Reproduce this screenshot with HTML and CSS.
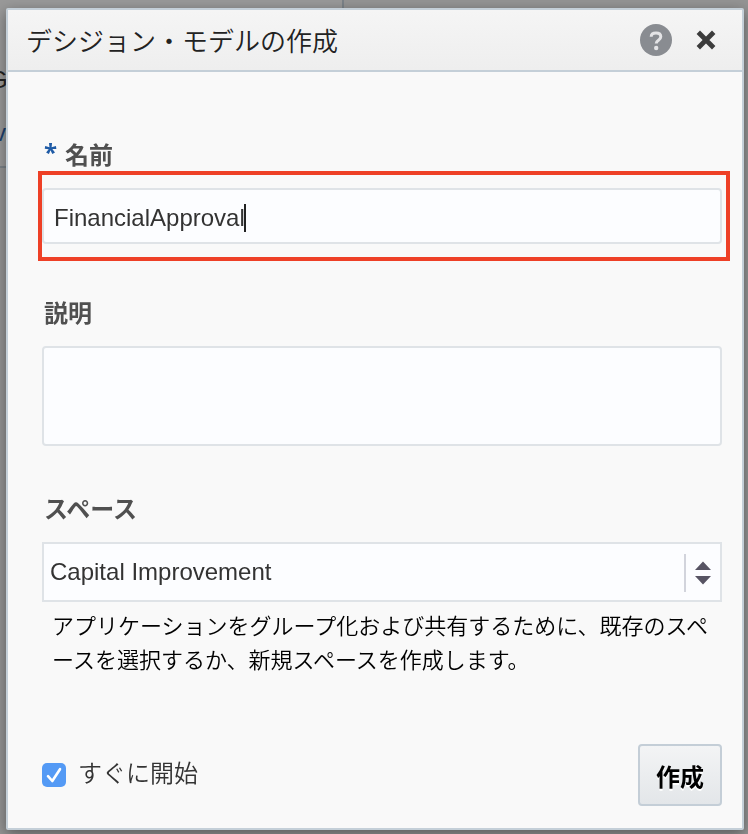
FILE: index.html
```html
<!DOCTYPE html>
<html lang="ja">
<head>
<meta charset="utf-8">
<meta name="viewport" content="width=device-width, initial-scale=1">
<title>デシジョン・モデルの作成</title>
<link rel="stylesheet" href="styles.css">
</head>
<body>
<div class="backdrop" aria-hidden="true">
  <div class="backdrop-panel">
    <span class="backdrop-text">G</span>
    <span class="backdrop-link">v</span>
  </div>
</div>
<main class="dialog" role="dialog" aria-labelledby="dialog-title">
  <header class="dialog-header">
    <h1 class="dialog-title" id="dialog-title">デシジョン・モデルの作成</h1>
    <button class="icon-button" type="button" aria-label="ヘルプ">
      <svg width="32" height="32" viewBox="0 0 32 32">
        <circle cx="16" cy="16" r="16" fill="#898c91"/>
        <path d="M11.200 12.800C11.200 10 13 8.900 16 8.900s4.800 1.400 4.800 3.900c0 3.600-4.600 3.200-4.600 6.700" fill="none" stroke="#e4e4e6" stroke-width="3"/>
        <circle cx="16.200" cy="24" r="2.200" fill="#e4e4e6"/>
      </svg>
    </button>
    <button class="icon-button" type="button" aria-label="閉じる">
      <svg width="24" height="24" viewBox="0 0 24 24">
        <path d="M4.300 4.300 19.700 19.700M19.700 4.300 4.300 19.700" stroke="#3c3c3c" stroke-width="4.800"/>
      </svg>
    </button>
  </header>
  <form class="form">
    <div class="field field-name">
      <label class="label" for="name"><span class="required">*</span>名前</label>
      <div class="highlighted">
        <input class="control text-input" id="name" type="text" value="FinancialApproval" required>
        <span class="caret"></span>
      </div>
    </div>
    <div class="field field-description">
      <label class="label" for="description">説明</label>
      <textarea class="control text-area" id="description"></textarea>
    </div>
    <div class="field">
      <label class="label" for="space">スペース</label>
      <div class="select-box">
        <select class="control select" id="space" aria-describedby="space-help">
          <option>Capital Improvement</option>
        </select>
        <svg class="select-arrows" width="28" height="38" viewBox="0 0 28 38" aria-hidden="true">
          <path d="M0 0h2v38H0z" fill="#d2d4dc"/>
          <path d="M11 16 19 7.500 27 16zM11 22h16l-8 8.500z" fill="#575463"/>
        </svg>
      </div>
      <p class="help" id="space-help">アプリケーションをグループ化および共有するために、既存のスペースを選択するか、新規スペースを作成します。</p>
    </div>
    <footer class="footer">
      <label class="check">
        <input class="checkbox" type="checkbox" checked>
        <svg class="check-mark" width="24" height="24" viewBox="0 0 24 24" aria-hidden="true">
          <path d="M6 13.200 10.300 18 18 6.200" fill="none" stroke="#fff" stroke-width="2.600" stroke-linecap="round" stroke-linejoin="round"/>
        </svg>
        <span class="check-text">すぐに開始</span>
      </label>
      <button class="create" type="submit">作成</button>
    </footer>
  </form>
</main>
</body>
</html>
```
FILE: styles.css
```css
* {
  box-sizing: border-box;
}

body {
  margin: 0;
  min-height: 100vh;
  padding: 8px 4px 4px 6px;
  display: flex;
  background: #949494;
  color: #333;
  font-family: "Liberation Sans", "Noto Sans CJK JP", sans-serif;
  font-size: 24px;
}

.backdrop {
  position: fixed;
  inset: 0;
  overflow: hidden;
}

.backdrop-panel {
  width: 344px;
  height: 168px;
  background: #999;
  border-right: 2px solid #7b8288;
  border-bottom: 2px solid #7b8288;
}

.backdrop-text,
.backdrop-link {
  position: absolute;
  left: -11px;
  top: 66px;
  color: #222;
}

.backdrop-link {
  left: -6px;
  top: 119px;
  color: #1c3f6e;
}

.dialog {
  position: relative;
  flex: 1;
  display: flex;
  flex-direction: column;
  background: #f9f9f9;
  border: 2px solid #c4cfd8;
  border-radius: 2px;
  box-shadow: 0 4px 14px rgba(0, 0, 0, 0.4);
}

.dialog-header {
  display: flex;
  align-items: center;
  gap: 22px;
  height: 62px;
  padding: 0 24px 0 18px;
  background: linear-gradient(#f5f5f5, #eee);
  border-bottom: 2px solid #c4cfd8;
}

.dialog-title {
  flex: 1;
  margin: 0;
  padding-top: 4px;
  color: #222;
  font-size: 26px;
  font-weight: 350;
  line-height: 36px;
}

.icon-button {
  display: flex;
  padding: 0;
  border: 0;
  background: none;
}

.form {
  flex: 1;
  display: flex;
  flex-direction: column;
  padding: 68px 20px 22px 34px;
}

.field-name {
  margin-bottom: 54px;
}

.field-description {
  margin-bottom: 48px;
}

.label {
  display: flex;
  height: 32px;
  margin-bottom: 16px;
  padding-left: 2px;
  color: #505050;
  font-weight: 700;
  line-height: 32px;
}

.required {
  width: 21px;
  color: #1f5ba6;
  font-family: "Open Sans", sans-serif;
  line-height: 24px;
}

.control {
  display: block;
  width: 100%;
  margin: 0;
  border: 2px solid #dfe3e7;
  border-radius: 4px;
  background: #fcfdff;
  color: #333;
  font: inherit;
  outline: 0;
}

.highlighted,
.select-box {
  position: relative;
}

.highlighted::after {
  content: "";
  position: absolute;
  inset: -17px -8px -17px -4px;
  border: 4px solid #ee4026;
  pointer-events: none;
}

.text-input {
  height: 56px;
  padding: 4px 10px 0;
}

.caret {
  position: absolute;
  left: 202px;
  top: 16px;
  width: 2px;
  height: 28px;
  background: #222;
}

.text-area {
  height: 100px;
  padding: 10px;
  resize: none;
}

.select {
  height: 60px;
  padding: 0 40px 2px 6px;
  border-radius: 0;
  appearance: none;
}

.select-arrows {
  position: absolute;
  right: 10px;
  top: 12px;
  pointer-events: none;
}

.help {
  margin: 8px 0 0;
  padding: 0 8px 0 10px;
  color: #000;
  font-size: 22px;
  font-weight: 350;
  line-height: 34px;
  line-break: anywhere;
}

.footer {
  display: flex;
  align-items: center;
  justify-content: space-between;
  margin-top: auto;
}

.check {
  position: relative;
  display: flex;
  align-items: center;
  gap: 12px;
  font-weight: 350;
}

.checkbox {
  width: 24px;
  height: 24px;
  margin: 0;
  border-radius: 5px;
  background: #549af5;
  appearance: none;
}

.check-mark {
  position: absolute;
  left: 0;
  pointer-events: none;
}

.check-text {
  padding-bottom: 8px;
}

.create {
  width: 84px;
  height: 62px;
  padding: 0;
  border: 2px solid #c4ced7;
  border-radius: 4px;
  background: linear-gradient(#f3f4f5, #e3e6e9);
  color: #000;
  font: inherit;
  font-weight: 700;
  text-shadow: 0 2px 0 #fff;
}
```
